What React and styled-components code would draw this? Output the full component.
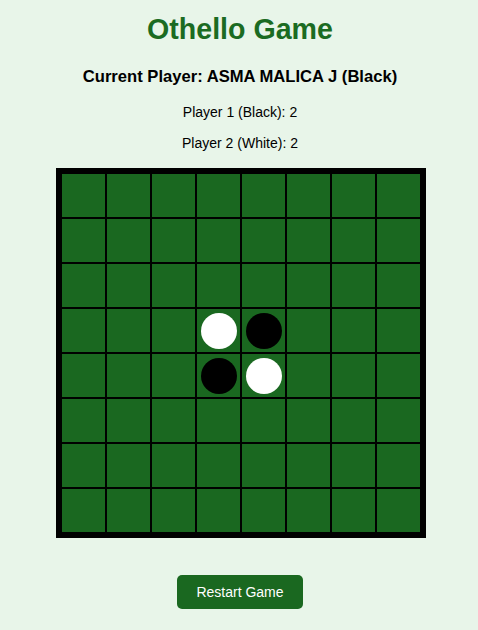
import styled, { createGlobalStyle } from "styled-components";

const GlobalStyle = createGlobalStyle`
  body {
    margin: 0;
    background: #e8f5e9;
    font-family: "Liberation Sans", Arial, sans-serif;
  }
`;

const Page = styled.div`
  display: flex;
  flex-direction: column;
  align-items: center;
  padding-left: 2px;
  padding-bottom: 20px;
`;

const Title = styled.h1`
  margin: 13px 0 0;
  font-size: 28.6px;
  font-weight: bold;
  color: #1b6b22;
  line-height: normal;
`;

const Current = styled.h2`
  margin: 21px 0 0;
  font-size: 16.6px;
  font-weight: bold;
  color: #000;
  line-height: normal;
`;

const Score = styled.p`
  margin: ${(p) => p.$top}px 0 0;
  font-size: 14px;
  color: #000;
  line-height: normal;
`;

const Board = styled.div`
  margin-top: 17px;
  margin-left: 2px;
  display: grid;
  grid-template-columns: repeat(8, 45px);
  border: 5px solid #000;
`;

const Cell = styled.div`
  box-sizing: border-box;
  width: 45px;
  height: 45px;
  border: 1px solid #000;
  background: #1a6820;
  display: flex;
  align-items: center;
  justify-content: center;
`;

const Disc = styled.div`
  width: 36px;
  height: 36px;
  border-radius: 50%;
  background: ${(p) => (p.$color === "white" ? "#fff" : "#000")};
`;

const RestartButton = styled.button`
  margin-top: 37px;
  padding: 0 19px;
  height: 34px;
  border: none;
  border-radius: 5px;
  background: #1a6820;
  color: #fff;
  font-family: "Liberation Sans", Arial, sans-serif;
  font-size: 14px;
  cursor: pointer;
`;

const initial = () => {
  const b = Array.from({ length: 8 }, () => Array(8).fill(null));
  b[3][3] = "white";
  b[3][4] = "black";
  b[4][3] = "black";
  b[4][4] = "white";
  return b;
};

export default function App() {
  const board = initial();

  return (
    <Page>
      <GlobalStyle />
      <Title>Othello Game</Title>
      <Current>Current Player: ASMA MALICA J (Black)</Current>
      <Score $top={17}>Player 1 (Black): 2</Score>
      <Score $top={15}>Player 2 (White): 2</Score>
      <Board>
        {board.map((row, r) =>
          row.map((cell, c) => (
            <Cell key={r + "-" + c}>{cell && <Disc $color={cell} />}</Cell>
          ))
        )}
      </Board>
      <RestartButton>Restart Game</RestartButton>
    </Page>
  );
}
